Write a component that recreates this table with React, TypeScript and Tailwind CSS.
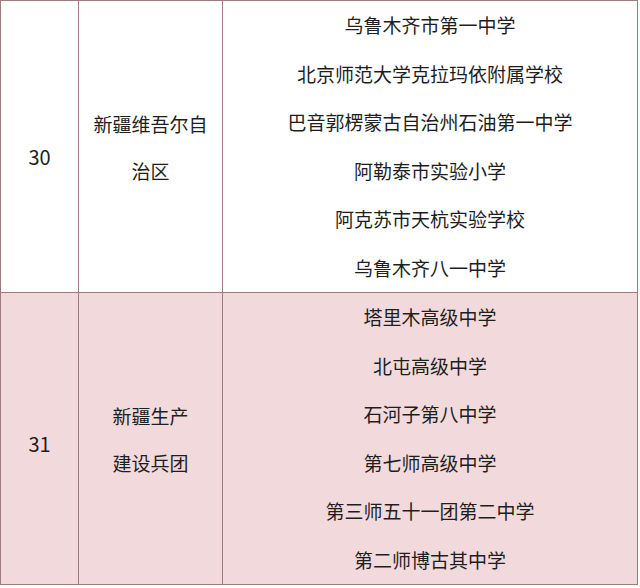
import React from 'react';

const rows = [
  {
    no: '30',
    noPad: 'pt-[20px]',
    region: ['新疆维吾尔自', '治区'],
    bg: 'bg-white',
    schools: [
      '乌鲁木齐市第一中学',
      '北京师范大学克拉玛依附属学校',
      '巴音郭楞蒙古自治州石油第一中学',
      '阿勒泰市实验小学',
      '阿克苏市天杭实验学校',
      '乌鲁木齐八一中学',
    ],
  },
  {
    no: '31',
    noPad: 'pt-[10px]',
    region: ['新疆生产', '建设兵团'],
    bg: 'bg-[#f2dadc]',
    schools: [
      '塔里木高级中学',
      '北屯高级中学',
      '石河子第八中学',
      '第七师高级中学',
      '第三师五十一团第二中学',
      '第二师博古其中学',
    ],
  },
];

export default function App() {
  return (
    <div
      className="w-[640px] h-[588px] bg-white text-[#1e1e1e] text-[19px]"
      style={{ fontFamily: '"Noto Sans CJK SC", "Noto Sans", sans-serif' }}
    >
      <div className="w-[638px] border-t-[1.5px] border-l-[1.5px] border-[#a07a7c]">
        {rows.map((row) => (
          <div
            key={row.no}
            className={`grid grid-cols-[78px_144px_1fr] h-[292px] border-b-[1.5px] border-[#a07a7c] ${row.bg}`}
          >
            <div className={`flex items-center justify-center border-r-[1.5px] border-[#a07a7c] text-[20px] ${row.noPad}`}>
              {row.no}
            </div>
            <div className="flex flex-col items-center justify-center border-r-[1.5px] border-[#a07a7c] leading-[47px]">
              {row.region.map((line) => (
                <span key={line}>{line}</span>
              ))}
            </div>
            <div className="flex flex-col border-r-[1.5px] border-[#a07a7c]">
              {row.schools.map((s) => (
                <div key={s} className="flex-1 flex items-center justify-center">
                  {s}
                </div>
              ))}
            </div>
          </div>
        ))}
      </div>
    </div>
  );
}
